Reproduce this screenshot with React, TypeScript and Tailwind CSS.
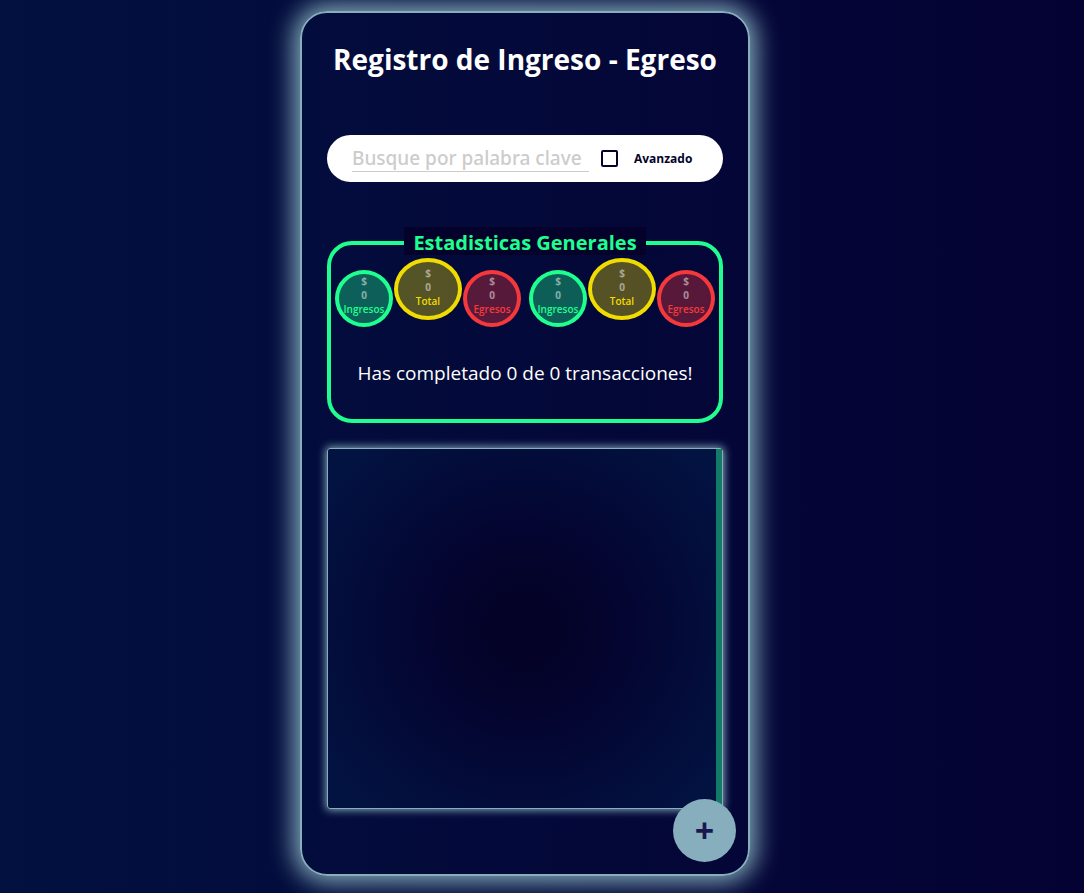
type StatProps = { label: string; value: number; tone: 'income' | 'total' | 'expense' };

const tones = {
  income: 'mt-3 h-[57px] w-[58px] border-[#1fff8f] bg-[#1fff8f]/35 text-[#1fff8f]',
  total: 'h-[62px] w-[68px] pt-1 border-[#f0dc00] bg-[#f0dc00]/35 text-[#f0dc00]',
  expense: 'mt-3 h-[57px] w-[58px] border-[#f5383c] bg-[#f5383c]/35 text-[#f5383c]',
};

function Stat({ label, value, tone }: StatProps) {
  return (
    <div className={`flex shrink-0 flex-col items-center rounded-[50%] border-4 text-[10px] leading-[14px] font-semibold ${tones[tone]}`}>
      <span className="font-bold text-white/50">$</span>
      <span className="font-bold text-white/50">{value}</span>
      <span className="whitespace-nowrap">{label}</span>
    </div>
  );
}

function StatGroup() {
  return (
    <div className="flex items-start justify-center gap-px">
      <Stat label="Ingresos" value={0} tone="income" />
      <Stat label="Total" value={0} tone="total" />
      <Stat label="Egresos" value={0} tone="expense" />
    </div>
  );
}

export default function App() {
  return (
    <div className="min-h-screen bg-linear-to-r from-[#021140] to-[#040233] pt-[11px] pr-[34px] pb-4 font-['Open_Sans','Segoe_UI',sans-serif]">
      <main className="relative mx-auto flex w-full max-w-[450px] flex-col rounded-[27px] border-2 border-[#86aebd] px-[25px] pt-6 pb-[65px] shadow-[0_0_25px_6px_#86aebd]">
        <h1 className="text-center text-[28px] leading-[44px] font-bold whitespace-nowrap text-white">Registro de Ingreso - Egreso</h1>

        <form className="mt-[54px] flex h-[47px] items-center rounded-full bg-white px-[25px]">
          <input
            type="text"
            aria-label="Buscar transacciones"
            placeholder="Busque por palabra clave"
            className="h-[27px] w-[237px] min-w-0 border-b border-[#ccc] bg-transparent font-['Noto_Sans',sans-serif] text-[19px] font-medium text-[#04022a] outline-none placeholder:text-[#ccc]"
          />
          <label className="ml-3 flex items-center gap-4 text-[12px] font-bold text-[#04022a]">
            <input type="checkbox" className="size-[17px] appearance-none rounded-xs border-2 border-[#04022a] checked:bg-[#04022a]" />
            Avanzado
          </label>
        </form>

        <fieldset className="mt-[45px] min-w-0 rounded-[25px] border-4 border-[#1fff8f] pb-8">
          <legend className="mx-auto h-8">
            <span className="block h-7 bg-[#04022a] px-[9px] pt-1 text-[20px] leading-6 font-bold whitespace-nowrap text-[#1fff8f]">
              Estadisticas Generales
            </span>
          </legend>
          <div className="-mt-px grid grid-cols-2">
            <StatGroup />
            <StatGroup />
          </div>
          <p className="mt-8 text-center text-[19px] leading-7 whitespace-nowrap text-white">Has completado 0 de 0 transacciones!</p>
        </fieldset>

        <section
          aria-label="Transacciones"
          className="mt-[25px] flex h-[361px] justify-end rounded-[3px] border border-[#86aebd] bg-[radial-gradient(circle,#040226_10%,#040531_38%,#021342_92%)] shadow-[0_0_8px_1px_#86aebd]"
        >
          <div className="w-1.5 bg-[#147a68]" />
        </section>

        <button
          type="button"
          aria-label="Agregar transacción"
          className="absolute right-3 bottom-3 flex size-[63px] items-center justify-center rounded-full bg-[#86aebd] text-[34px] font-bold text-[#1b1650]"
        >
          +
        </button>
      </main>
    </div>
  );
}
